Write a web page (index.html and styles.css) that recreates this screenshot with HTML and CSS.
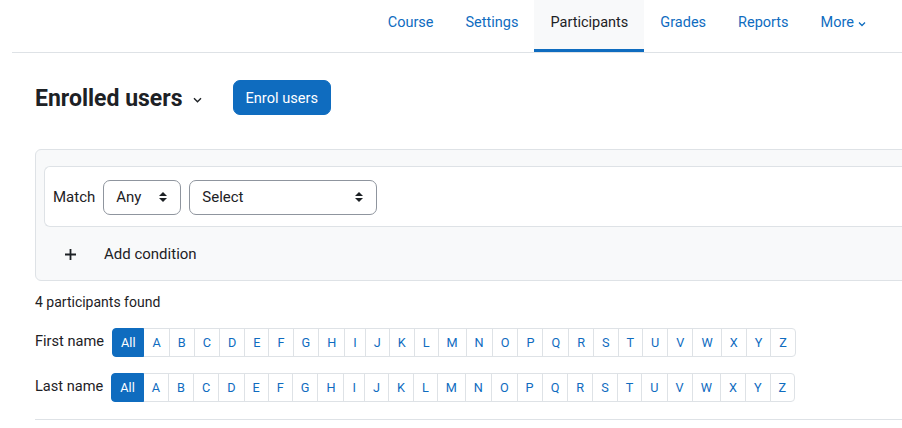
FILE: index.html
```html
<!DOCTYPE html>
<html lang="en">
<head>
  <meta charset="UTF-8">
  <meta name="viewport" content="width=device-width, initial-scale=1.0">
  <title>Participants</title>
  <link rel="stylesheet" href="styles.css">
</head>
<body>

<nav class="secondary-nav">
  <ul class="nav-tabs">
    <li><a href="#">Course</a></li>
    <li><a href="#">Settings</a></li>
    <li class="active"><a href="#">Participants</a></li>
    <li><a href="#">Grades</a></li>
    <li><a href="#">Reports</a></li>
    <li><a href="#">More
      <svg class="caret" width="8" height="6" viewBox="0 0 8 6"><path d="M1 1.5 L4 4.5 L7 1.5" fill="none" stroke="currentColor" stroke-width="1.3"/></svg>
    </a></li>
  </ul>
</nav>

<main class="page">
  <div class="page-head">
    <h2 class="page-title">Enrolled users
      <svg class="caret" width="9" height="6" viewBox="0 0 9 6"><path d="M1 1.2 L4.5 4.7 L8 1.2" fill="none" stroke="#1d2125" stroke-width="1.4"/></svg>
    </h2>
    <button class="btn-primary">Enrol users</button>
  </div>

  <section class="filter-box">
    <div class="filter-row">
      <label>Match</label>
      <div class="select select-any">Any <span class="updown"></span></div>
      <div class="select select-field">Select <span class="updown"></span></div>
    </div>
    <div class="add-condition">
      <svg class="plus" width="13" height="13" viewBox="0 0 13 13"><path d="M6.5 1 V12 M1 6.5 H12" stroke="#1d2125" stroke-width="1.8"/></svg>
      <span>Add condition</span>
    </div>
  </section>

  <p class="count">4 participants found</p>

  <div class="initials">
    <span class="initials-label">First name</span>
    <ul class="pager" id="first-pager"></ul>
  </div>
  <div class="initials">
    <span class="initials-label">Last name</span>
    <ul class="pager" id="last-pager"></ul>
  </div>

  <hr class="divider">
</main>

<script>
  // build the A-Z initials bars
  const letters = 'ABCDEFGHIJKLMNOPQRSTUVWXYZ'.split('');
  ['first-pager', 'last-pager'].forEach(id => {
    const pager = document.getElementById(id);
    const all = document.createElement('li');
    all.className = 'active';
    all.innerHTML = '<a href="#">All</a>';
    pager.appendChild(all);
    letters.forEach(l => {
      const li = document.createElement('li');
      li.innerHTML = '<a href="#">' + l + '</a>';
      pager.appendChild(li);
    });
  });
</script>

</body>
</html>
```

FILE: styles.css
```css
/* base */
* {
  box-sizing: border-box;
}
body {
  margin: 0;
  font-family: "Segoe UI", Roboto, "Noto Sans", "Liberation Sans", sans-serif;
  font-size: 15px;
  color: #1d2125;
  background: #fff;
  overflow: hidden;
}
a {
  color: #0f6cbf;
  text-decoration: none;
}

/* secondary navigation */
.secondary-nav {
  margin-left: 12px;
  border-bottom: 1px solid #dee2e6;
  height: 53px;
}
.nav-tabs {
  list-style: none;
  margin: 0;
  padding: 0;
  display: flex;
  justify-content: flex-end;
  margin-right: 20px;
  height: 52px;
  font-size: 14.5px;
}
.nav-tabs li {
  height: 52px;
  border-bottom: 3px solid transparent;
}
.nav-tabs li a {
  display: flex;
  align-items: center;
  gap: 4px;
  padding: 12px 16px 0;
  line-height: 22px;
}
.nav-tabs li.active {
  background: #f8f9fa;
  border-bottom-color: #0f6cbf;
}
.nav-tabs li.active a {
  color: #1d2125;
}
.nav-tabs .caret {
  margin-top: 1px;
}

/* page */
.page {
  padding-left: 35px;
}
.page-head {
  display: flex;
  align-items: center;
  margin-top: 27px;
  height: 35px;
}
.page-title {
  margin: 0;
  font-size: 23px;
  font-weight: 700;
  display: flex;
  align-items: center;
  gap: 10px;
  margin-right: 31px;
  padding-top: 2px;
}
.page-title .caret {
  margin-top: 3px;
}
.btn-primary {
  font-family: inherit;
  font-size: 14.6px;
  color: #fff;
  background: #0f6cbf;
  border: 1px solid #0f6cbf;
  border-radius: 7px;
  height: 35px;
  padding: 0 12px;
}

/* filter */
.filter-box {
  margin-top: 34px;
  width: 900px;
  background: #f8f9fa;
  border: 1px solid #dee2e6;
  border-radius: 6px;
  padding: 16px 0 0 8px;
}
.filter-row {
  background: #fff;
  border: 1px solid #dee2e6;
  border-right: none;
  border-radius: 6px 0 0 6px;
  height: 61px;
  display: flex;
  align-items: center;
  gap: 8px;
  padding-left: 8px;
  padding-top: 1px;
}
.select {
  height: 35px;
  border: 1px solid #8f959e;
  border-radius: 7px;
  display: flex;
  align-items: center;
  justify-content: space-between;
  padding: 0 13px 0 12px;
}
.select-any {
  width: 78px;
}
.select-field {
  width: 188px;
}
.updown {
  position: relative;
  width: 8px;
  height: 10px;
}
.updown::before, .updown::after {
  content: "";
  position: absolute;
  left: 0;
  border-left: 4px solid transparent;
  border-right: 4px solid transparent;
}
.updown::before {
  top: 0;
  border-bottom: 4px solid #1d2125;
}
.updown::after {
  bottom: 0;
  border-top: 4px solid #1d2125;
}
.add-condition {
  height: 53px;
  display: flex;
  align-items: center;
  padding-left: 20px;
  padding-top: 1px;
  gap: 27px;
}

/* results */
.count {
  margin: 11px 0 16px;
  font-size: 14px;
  line-height: 20px;
}
.initials {
  display: flex;
  align-items: center;
  margin-bottom: 16px;
}
.initials-label {
  margin-right: 8px;
  margin-top: -4px;
  font-size: 14.6px;
}
.pager {
  list-style: none;
  margin: 0;
  padding: 0;
  display: flex;
  font-size: 12.7px;
}
.pager li a {
  display: block;
  height: 29px;
  line-height: 27px;
  padding: 0 8px;
  border: 1px solid #dee2e6;
  margin-left: -1px;
  background: #fff;
}
.pager li:first-child a {
  margin-left: 0;
  border-radius: 4px 0 0 4px;
}
.pager li:last-child a {
  border-radius: 0 4px 4px 0;
}
.pager li.active a {
  background: #0f6cbf;
  border-color: #0f6cbf;
  color: #fff;
  position: relative;
}
.initials + .initials {
  margin-bottom: 17px;
}
.divider {
  margin: 0;
  border: none;
  border-top: 1px solid #dee2e6;
  width: 900px;
}
```
